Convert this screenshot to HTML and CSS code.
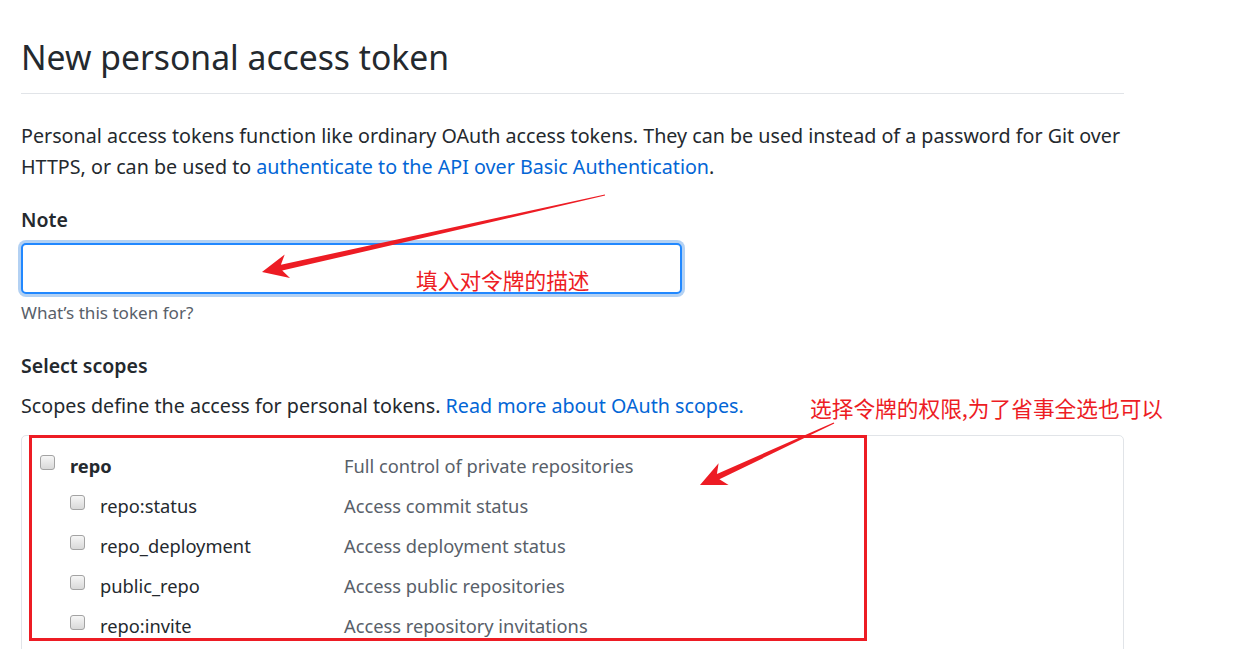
FILE: index.html
```html
<!DOCTYPE html>
<html lang="en">
<head>
<meta charset="utf-8">
<title>New personal access token</title>
<link rel="stylesheet" href="styles.css">
</head>
<body>
<div class="page">
  <div class="subhead">
    <h1 class="subhead-title">New personal access token</h1>
  </div>
  <p class="intro">Personal access tokens function like ordinary OAuth access tokens. They can be used instead of a password for Git over HTTPS, or can be used to <a class="link" href="#">authenticate to the API over Basic Authentication</a>.</p>

  <div class="form-group">
    <label class="form-label" for="note">Note</label>
    <input class="form-input" id="note" type="text">
    <p class="note-hint">What’s this token for?</p>
  </div>

  <div class="form-group scopes-group">
    <h3 class="form-label">Select scopes</h3>
    <p class="scopes-desc">Scopes define the access for personal tokens. <a class="link" href="#">Read more about OAuth scopes.</a></p>
    <div class="scopes-box">
      <div class="scope-row">
        <div class="scope-name top"><span class="check"></span><span class="name-text bold">repo</span></div>
        <div class="scope-desc">Full control of private repositories</div>
      </div>
      <div class="scope-row">
        <div class="scope-name sub"><span class="check"></span><span class="name-text">repo:status</span></div>
        <div class="scope-desc">Access commit status</div>
      </div>
      <div class="scope-row">
        <div class="scope-name sub"><span class="check"></span><span class="name-text">repo_deployment</span></div>
        <div class="scope-desc">Access deployment status</div>
      </div>
      <div class="scope-row">
        <div class="scope-name sub"><span class="check"></span><span class="name-text">public_repo</span></div>
        <div class="scope-desc">Access public repositories</div>
      </div>
      <div class="scope-row">
        <div class="scope-name sub"><span class="check"></span><span class="name-text">repo:invite</span></div>
        <div class="scope-desc">Access repository invitations</div>
      </div>
    </div>
  </div>
</div>

<div class="note-mark note-mark-1">填入对令牌的描述</div>
<div class="note-mark note-mark-2">选择令牌的权限,为了省事全选也可以</div>
<div class="red-frame"></div>
<svg class="arrows" width="1252" height="649" viewBox="0 0 1252 649" aria-hidden="true">
  <polygon points="605.1,195.6 282.2,270.6 290.0,278.0 262,272 284.7,254.6 280.9,264.7 604.9,194.4" />
  <polygon points="834.3,423.5 719.4,479.3 728.6,485.0 700,485 718.6,463.2 716.9,473.9 833.7,422.5" />
</svg>
</body>
</html>
```

FILE: styles.css
```css
html, body {
  margin: 0;
  padding: 0;
  background: #fff;
}

body {
  font-family: "Noto Sans", "Open Sans", sans-serif;
  color: #24292e;
  overflow: hidden;
  height: 649px;
  position: relative;
}

.page {
  padding-left: 21px;
  width: 1103px;
}

.subhead {
  padding-top: 32px;
  padding-bottom: 11px;
  border-bottom: 1px solid #e1e4e8;
}

.subhead-title {
  margin: 0;
  font-size: 33.7px;
  line-height: 50px;
  font-weight: 400;
}

.intro {
  margin: 26px -6px 0 0;
  font-size: 19.7px;
  line-height: 31px;
}

.link {
  color: #0366d6;
  text-decoration: none;
}

.form-group {
  margin-top: 22px;
}

.form-label {
  display: block;
  margin: 0;
  font-size: 19.5px;
  line-height: 31px;
  font-weight: 600;
}

.form-input {
  display: block;
  box-sizing: border-box;
  margin-top: 8px;
  width: 661px;
  height: 51px;
  border: 2px solid #2188ff;
  border-radius: 5px;
  box-shadow: 0 0 0 3px rgba(3, 102, 214, 0.3);
  outline: none;
  font: inherit;
  padding: 0 12px;
  background: #fff;
}

.note-hint {
  margin: 5px 0 0;
  font-size: 17.1px;
  line-height: 27px;
  color: #586069;
}

.scopes-group {
  margin-top: 24px;
}

.scopes-desc {
  margin: 9px 0 0;
  font-size: 19.7px;
  line-height: 31px;
}

.scopes-box {
  margin-top: 14px;
  border: 1px solid #e1e4e8;
  border-radius: 5px;
  padding: 9px 0 60px 18px;
}

.scope-row {
  display: grid;
  grid-template-columns: 304px 1fr;
  height: 40px;
  align-items: center;
  font-size: 18.3px;
}

.scope-name {
  display: flex;
  align-items: center;
}

.scope-name.sub {
  padding-left: 30px;
}

.check {
  box-sizing: border-box;
  width: 15px;
  height: 15px;
  margin-bottom: 6px;
  border: 1px solid #a3a3a3;
  border-radius: 3px;
  background: linear-gradient(#f6f6f6, #d9d9d9);
  flex: none;
}

.name-text {
  margin-left: 15px;
  color: #24292e;
}

.name-text.bold {
  font-weight: 700;
}

.scope-desc {
  color: #586069;
}

.note-mark {
  position: absolute;
  font-family: "Noto Sans CJK SC", sans-serif;
  color: #ed1c24;
  font-size: 21.7px;
  line-height: 30px;
  white-space: nowrap;
}

.note-mark-1 {
  left: 416px;
  top: 265px;
}

.note-mark-2 {
  left: 810px;
  top: 393px;
}

.red-frame {
  position: absolute;
  left: 29px;
  top: 435px;
  width: 838px;
  height: 206px;
  box-sizing: border-box;
  border: 3px solid #ed1c24;
}

.arrows {
  position: absolute;
  left: 0;
  top: 0;
  pointer-events: none;
}

.arrows polygon {
  fill: #ed1c24;
}
```
